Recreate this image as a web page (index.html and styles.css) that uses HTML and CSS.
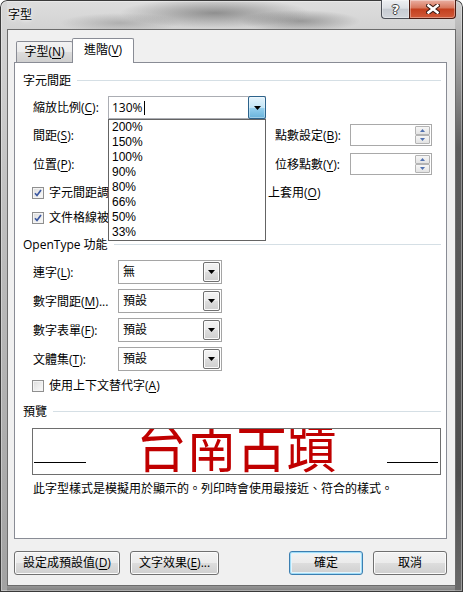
FILE: index.html
```html
<!DOCTYPE html>
<html lang="zh-Hant">
<head>
<meta charset="utf-8">
<title>字型</title>
<link rel="stylesheet" href="styles.css">
</head>
<body>
<div class="window">
  <header class="titlebar">
    <span class="title">字型</span>
    <div class="caption">
      <div class="cap help"><span class="q">?</span></div>
      <div class="cap close">
        <svg width="14" height="10" viewBox="0 0 14 10"><path class="x-out" d="M2.5 1.5L11.5 8.5M11.5 1.5L2.5 8.5"/><path class="x-in" d="M2.5 1.5L11.5 8.5M11.5 1.5L2.5 8.5"/></svg>
      </div>
    </div>
  </header>
  <div class="client">
    <div class="tabs">
      <div class="tab">字型(<u>N</u>)</div>
      <div class="tab active">進階(<u>V</u>)</div>
    </div>
    <div class="panel">
      <div class="group-head"><span>字元間距</span><i class="rule"></i></div>

      <div class="row r-combo">
        <span class="lbl w75">縮放比例(<u>C</u>):</span>
        <div class="combo">
          <span class="combo-text">130%<i class="caret"></i></span>
          <span class="combo-btn"><svg width="7" height="4" viewBox="0 0 7 4"><path d="M0 0h7L3.5 4z"/></svg></span>
          <ul class="droplist">
            <li>200%</li>
            <li>150%</li>
            <li>100%</li>
            <li>90%</li>
            <li>80%</li>
            <li>66%</li>
            <li>50%</li>
            <li>33%</li>
          </ul>
        </div>
      </div>

      <div class="row r-spin sp1">
        <span class="lbl">間距(<u>S</u>):</span>
        <span class="lbl w75 right">點數設定(<u>B</u>):</span>
        <div class="spin">
          <div class="spin-btns">
            <span><svg width="5" height="3" viewBox="0 0 5 3"><path d="M0 3h5L2.5 0z"/></svg></span>
            <span><svg width="5" height="3" viewBox="0 0 5 3"><path d="M0 0h5L2.5 3z"/></svg></span>
          </div>
        </div>
      </div>

      <div class="row r-spin sp2">
        <span class="lbl">位置(<u>P</u>):</span>
        <span class="lbl w75 right">位移點數(<u>Y</u>):</span>
        <div class="spin">
          <div class="spin-btns">
            <span><svg width="5" height="3" viewBox="0 0 5 3"><path d="M0 3h5L2.5 0z"/></svg></span>
            <span><svg width="5" height="3" viewBox="0 0 5 3"><path d="M0 0h5L2.5 3z"/></svg></span>
          </div>
        </div>
      </div>

      <div class="row r-check c1">
        <span class="check"><svg width="8" height="8" viewBox="0 0 8 8"><path d="M1 4.2L3 6.5L7 1"/></svg></span>
        <span class="clip-l">字元間距調</span>
        <span class="after">上套用(<u>O</u>)</span>
      </div>

      <div class="row r-check c2">
        <span class="check"><svg width="8" height="8" viewBox="0 0 8 8"><path d="M1 4.2L3 6.5L7 1"/></svg></span>
        <span class="clip-l">文件格線被</span>
      </div>

      <div class="group-head g2"><span>OpenType 功能</span><i class="rule"></i></div>

      <div class="row r-select s1">
        <span class="lbl w85">連字(<u>L</u>):</span>
        <div class="select"><span class="select-text">無</span><span class="select-btn"><svg width="7" height="4" viewBox="0 0 7 4"><path d="M0 0h7L3.5 4z"/></svg></span></div>
      </div>
      <div class="row r-select">
        <span class="lbl w85">數字間距(<u>M</u>)...</span>
        <div class="select"><span class="select-text">預設</span><span class="select-btn"><svg width="7" height="4" viewBox="0 0 7 4"><path d="M0 0h7L3.5 4z"/></svg></span></div>
      </div>
      <div class="row r-select">
        <span class="lbl w85">數字表單(<u>F</u>):</span>
        <div class="select"><span class="select-text">預設</span><span class="select-btn"><svg width="7" height="4" viewBox="0 0 7 4"><path d="M0 0h7L3.5 4z"/></svg></span></div>
      </div>
      <div class="row r-select">
        <span class="lbl w85">文體集(<u>T</u>):</span>
        <div class="select"><span class="select-text">預設</span><span class="select-btn"><svg width="7" height="4" viewBox="0 0 7 4"><path d="M0 0h7L3.5 4z"/></svg></span></div>
      </div>

      <div class="row r-check c3">
        <span class="check off"></span>
        <span>使用上下文替代字(<u>A</u>)</span>
      </div>

      <div class="group-head g3"><span>預覽</span><i class="rule"></i></div>

      <div class="preview">
        <i class="base"></i>
        <span class="sample">台南古蹟</span>
        <i class="base"></i>
      </div>
      <p class="note">此字型樣式是模擬用於顯示的。列印時會使用最接近、符合的樣式。</p>
    </div>

    <div class="buttons">
      <div class="btn b-default">設定成預設值(<u>D</u>)</div>
      <div class="btn b-effects">文字效果(<u>E</u>)...</div>
      <div class="btn b-ok">確定</div>
      <div class="btn b-cancel">取消</div>
    </div>
  </div>
</div>
</body>
</html>
```

FILE: styles.css
```css
* { box-sizing: border-box; margin: 0; padding: 0; }
html, body { width: 463px; height: 592px; overflow: hidden; }
body {
  font-family: "Open Sans", "Noto Sans CJK TC", sans-serif;
  font-size: 12px;
  line-height: 16px;
  color: #000;
  background: #fff;
}
u { text-decoration: underline; text-decoration-thickness: 1px; text-underline-offset: 2px; }
ul { list-style: none; }
i { display: block; }

/* ---------- window frame ---------- */
.window {
  width: 463px;
  height: 592px;
  display: flex;
  flex-direction: column;
  padding: 0 7px;
  border-radius: 7px 7px 0 0;
  box-shadow: inset 0 0 0 1px #3a3a3a, inset 0 0 0 2px rgba(255,255,255,.35);
  background:
    radial-gradient(ellipse 95px 15px at 215px 13px, rgba(70,70,70,.5), rgba(70,70,70,0)),
    radial-gradient(ellipse 60px 11px at 300px 21px, rgba(60,60,60,.4), rgba(60,60,60,0)),
    radial-gradient(ellipse 60px 10px at 120px 23px, rgba(90,90,90,.3), rgba(90,90,90,0)),
    linear-gradient(180deg, #cfcfcf 0, #5d5d5d 25%, #4e4e4e 80%, #6a6a6a 100%) right top / 8px 100% no-repeat,
    linear-gradient(180deg, #d6d6d6 0, #bdbdbd 40%, #a2a2a2 100%) left top / 7px 100% no-repeat,
    linear-gradient(180deg, #9a9a9a, #7a7a7a) left bottom / 100% 7px no-repeat,
    linear-gradient(180deg, #dedede 0, #d2d2d2 30px, #c2c2c2 100%);
}

.titlebar {
  height: 29px;
  flex: none;
  display: flex;
  justify-content: space-between;
  align-items: flex-start;
}
.title {
  padding-left: 1px;
  line-height: 30px;
  text-shadow: 0 0 6px rgba(255,255,255,.9), 0 0 3px rgba(255,255,255,.9);
}
.caption { display: flex; }
.cap {
  height: 19px;
  display: flex;
  align-items: center;
  justify-content: center;
  border: 1px solid #4b4f57;
  border-top: 0;
  box-shadow: inset 0 0 0 1px rgba(255,255,255,.35);
}
.cap.help {
  width: 28px;
  border-right: 0;
  border-radius: 0 0 0 4px;
  background: linear-gradient(180deg, #eef0f3 0, #dde0e5 45%, #c6cbd2 52%, #d2d6dc 100%);
}
.cap.help .q {
  font-family: "DejaVu Sans", sans-serif;
  font-weight: bold;
  font-size: 13px;
  line-height: 17px;
  color: #fff;
  text-shadow: 1px 0 0 #404040, -1px 0 0 #404040, 0 1px 0 #404040, 0 -1px 0 #404040;
}
.cap.close {
  width: 47px;
  border-color: #4a1b12;
  border-radius: 0 0 4px 0;
  background: linear-gradient(180deg, #eab0a3 0, #d8795f 42%, #c4401f 52%, #d15a39 100%);
}
.x-out { stroke: #3b1a14; stroke-width: 4.6; fill: none; stroke-linecap: square; }
.x-in { stroke: #fff; stroke-width: 2.6; fill: none; stroke-linecap: square; }

/* ---------- client ---------- */
.client {
  height: 557px;
  flex: none;
  background: #f0f0f0;
  border: 1px solid #6c6c6c;
  padding: 8px 8px 0 6px;
  display: flex;
  flex-direction: column;
}

.tabs {
  height: 24px;
  flex: none;
  display: flex;
  align-items: flex-start;
  padding-left: 2px;
}
.tab {
  margin-top: 3px;
  width: 57px;
  height: 21px;
  border: 1px solid #898c95;
  border-bottom: 0;
  border-radius: 2px 2px 0 0;
  background: linear-gradient(180deg, #f3f3f3 0, #ebebeb 50%, #dddddd 51%, #cfcfcf 100%);
  text-align: center;
  line-height: 20px;
}
.tab.active {
  margin-top: 0;
  margin-left: -1px;
  width: 62px;
  height: 25px;
  background: #fff;
  line-height: 22px;
  position: relative;
  z-index: 1;
}

.panel {
  width: 433px;
  height: 477px;
  flex: none;
  background: #fff;
  border: 1px solid #898c95;
  padding: 10px 5px 0 8px;
  display: flex;
  flex-direction: column;
}

.group-head {
  height: 16px;
  flex: none;
  display: flex;
  align-items: center;
  gap: 6px;
}
.group-head .rule { flex: 1; height: 1px; background: #d5dfe5; margin-top: -1px; }
.g2 { margin-top: 10px; }
.g3 { margin-top: 9px; }

.row {
  flex: none;
  display: flex;
  align-items: center;
  padding-left: 10px;
}
.lbl { flex: none; padding-top: 1px; }
.w75 { width: 75px; }
.w85 { width: 85px; }
.right { margin-left: auto; }

/* text partly hidden by the open list */
.clip-l { flex: none; width: 59px; white-space: nowrap; overflow: hidden; }
.after { margin-left: 160px; white-space: nowrap; }

/* combo with open list */
.r-combo { margin-top: 7px; height: 23px; }
.combo {
  position: relative;
  width: 158px;
  height: 23px;
  border: 1px solid #abadb3;
  border-right: 0;
  background: #fff;
  display: flex;
}
.combo-text {
  flex: 1;
  padding-left: 3px;
  line-height: 21px;
  display: flex;
  align-items: center;
}
.caret { width: 1px; height: 14px; background: #000; margin-left: 1px; }
.combo-btn {
  width: 18px;
  height: 23px;
  margin: -1px 0 -1px 0;
  border: 1px solid #2c628b;
  border-radius: 2px;
  background: linear-gradient(180deg, #e5f4fc 0, #c4e5f6 50%, #98d1ef 51%, #68b3db 100%);
  box-shadow: inset 0 0 0 1px rgba(255,255,255,.35);
  display: flex;
  align-items: center;
  justify-content: center;
}
.combo-btn svg, .select-btn svg { fill: #000; }
.droplist {
  position: absolute;
  top: 22px;
  left: -1px;
  width: 158px;
  height: 122px;
  border: 1px solid #646464;
  background: #fff;
  z-index: 5;
  font-family: "Liberation Sans", "Noto Sans CJK TC", sans-serif;
}
.droplist li { height: 15px; line-height: 15px; padding-left: 3px; }

/* spinners */
.r-spin { padding-right: 9px; }
.sp1 { margin-top: 5px; height: 22px; }
.sp2 { margin-top: 7px; height: 22px; }
.spin {
  flex: none;
  width: 82px;
  height: 22px;
  border: 1px solid #a9a9a9;
  background: #fff;
  display: flex;
  justify-content: flex-end;
  padding: 1px;
}
.spin-btns { width: 15px; display: flex; flex-direction: column; }
.spin-btns span {
  flex: 1;
  border: 1px solid #b4b4b4;
  border-radius: 1px;
  background: linear-gradient(180deg, #f6f6f6, #e3e3e3);
  display: flex;
  align-items: center;
  justify-content: center;
}
.spin-btns span svg { fill: #5272b0; }

/* checkboxes */
.r-check { height: 18px; padding-left: 9px; }
.c1 { margin-top: 9px; }
.c2 { margin-top: 7px; }
.c3 { margin-top: 6px; }
.check {
  flex: none;
  width: 12px;
  height: 12px;
  margin-right: 5px;
  border: 1px solid #8f8f8f;
  background: linear-gradient(135deg, #dcdcdc, #fbfbfb);
  box-shadow: inset 0 0 0 1px #f4f4f4;
  display: flex;
  align-items: center;
  justify-content: center;
}
.check svg path { fill: none; stroke: #3a57a0; stroke-width: 1.7; }

/* selects */
.r-select { height: 24px; margin-top: 5px; }
.s1 { margin-top: 7px; }
.select {
  width: 104px;
  height: 24px;
  border: 1px solid #a5a5a5;
  background: #fff;
  display: flex;
  padding: 1px;
}
.select-text { flex: 1; padding-left: 3px; line-height: 20px; }
.select-btn {
  width: 17px;
  border: 1px solid #707070;
  border-radius: 2px;
  background: linear-gradient(180deg, #f3f3f3 0, #ebebeb 50%, #dddddd 51%, #cfcfcf 100%);
  box-shadow: inset 0 0 0 1px #fbfbfb;
  display: flex;
  align-items: center;
  justify-content: center;
}

/* preview */
.preview {
  flex: none;
  margin: 8px 0 0 9px;
  height: 47px;
  border: 1px solid #6e6e6e;
  background: #fff;
  overflow: hidden;
  display: flex;
  justify-content: space-between;
  align-items: flex-start;
}
.base { width: 52px; height: 1px; background: #000; margin-top: 33px; margin-left: 1px; }
.base:last-child { width: 51px; margin-left: 0; margin-right: 2px; }
.sample {
  font-family: "Noto Sans CJK TC", sans-serif;
  font-size: 50px;
  line-height: 50px;
  color: #c00000;
  margin-top: -9px;
  white-space: nowrap;
  transform: scaleY(1.16);
  transform-origin: 50% 100%;
}
.note { margin-top: 6px; padding-left: 10px; height: 16px; white-space: nowrap; }

/* bottom buttons */
.buttons {
  margin-top: 12px;
  height: 24px;
  flex: none;
  display: flex;
}
.btn {
  height: 24px;
  border: 1px solid #707070;
  border-radius: 3px;
  background: linear-gradient(180deg, #f3f3f3 0, #ebebeb 50%, #dddddd 51%, #cfcfcf 100%);
  box-shadow: inset 0 0 0 1px #fbfbfb;
  text-align: center;
  line-height: 21px;
}
.b-default { width: 106px; }
.b-effects { width: 89px; margin-left: 10px; }
.b-ok {
  width: 74px;
  margin-left: auto;
  border-color: #3c7fb1;
  box-shadow: inset 0 0 0 1px #9fdcf7, inset 0 0 0 2px #e4f4fc;
}
.b-cancel { width: 74px; margin-left: 10px; }
```
